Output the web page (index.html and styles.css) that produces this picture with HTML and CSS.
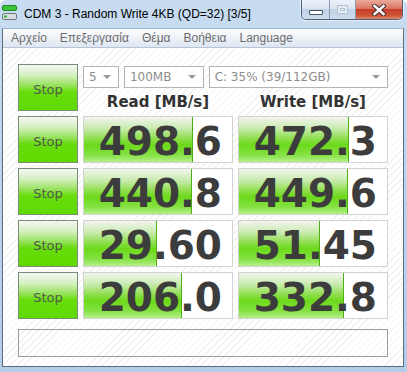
FILE: index.html
```html
<!DOCTYPE html>
<html lang="el">
<head>
    <meta charset="UTF-8">
    <title>CDM 3 - Random Write 4KB (QD=32) [3/5]</title>
    <link rel="stylesheet" href="styles.css">
</head>
<body>
    <div class="window">
        <div class="titlebar">
            <svg class="app-icon" width="15" height="16" viewBox="0 0 15 16">
                <rect x="0.5" y="0.5" width="14" height="5" rx="1.5" fill="#3cc23c" stroke="#1f8a1f"/>
                <rect x="0.5" y="8.5" width="14" height="6" rx="1.5" fill="#d8dde2" stroke="#6f7880"/>
                <rect x="2" y="10.5" width="3" height="2" fill="#38b838"/>
            </svg>
            <span class="title">CDM 3 - Random Write 4KB (QD=32) [3/5]</span>
            <div class="caption-buttons">
                <span class="cap-btn cap-min"><span class="glyph-min"></span></span>
                <span class="cap-btn cap-max"><span class="glyph-max"></span></span>
                <span class="cap-btn cap-close">
                    <svg width="14" height="12" viewBox="0 0 14 12">
                        <path d="M2.5 2 L11.5 10 M11.5 2 L2.5 10" stroke="#4a3431" stroke-width="4.5" stroke-linecap="square"/>
                        <path d="M2.5 2 L11.5 10 M11.5 2 L2.5 10" stroke="#ffffff" stroke-width="2.4" stroke-linecap="square"/>
                    </svg>
                </span>
            </div>
        </div>

        <div class="client">
            <div class="menubar">
                <span class="menu-item">Αρχείο</span>
                <span class="menu-item">Επεξεργασία</span>
                <span class="menu-item">Θέμα</span>
                <span class="menu-item">Βοήθεια</span>
                <span class="menu-item">Language</span>
            </div>

            <div class="content">
                <div class="bench">
                    <div class="stop-btn">Stop</div>
                    <div class="settings">
                        <div class="selects">
                            <div class="select sel-count">5<span class="arrow"></span></div>
                            <div class="select sel-size">100MB<span class="arrow"></span></div>
                            <div class="select sel-drive">C: 35% (39/112GB)<span class="arrow"></span></div>
                        </div>
                        <div class="headers">
                            <div class="col-head">Read [MB/s]</div>
                            <div class="col-head">Write [MB/s]</div>
                        </div>
                    </div>

                    <div class="stop-btn">Stop</div>
                    <div class="value-box"><div class="bar" style="width:109px"></div><span class="value">498.6</span></div>
                    <div class="value-box"><div class="bar" style="width:110px"></div><span class="value">472.3</span></div>

                    <div class="stop-btn">Stop</div>
                    <div class="value-box"><div class="bar" style="width:108px"></div><span class="value">440.8</span></div>
                    <div class="value-box"><div class="bar" style="width:109px"></div><span class="value">449.6</span></div>

                    <div class="stop-btn">Stop</div>
                    <div class="value-box"><div class="bar" style="width:73px"></div><span class="value">29.60</span></div>
                    <div class="value-box"><div class="bar" style="width:81px"></div><span class="value">51.45</span></div>

                    <div class="stop-btn">Stop</div>
                    <div class="value-box"><div class="bar" style="width:98px"></div><span class="value">206.0</span></div>
                    <div class="value-box"><div class="bar" style="width:105px"></div><span class="value">332.8</span></div>
                </div>

                <div class="comment"></div>
            </div>
        </div>
    </div>
</body>
</html>
```

FILE: styles.css
```css
* {
    margin: 0;
    padding: 0;
    box-sizing: border-box;
}

body {
    width: 407px;
    height: 372px;
    overflow: hidden;
    background: #ffffff;
    font-family: 'DejaVu Sans', Verdana, sans-serif;
}

.window {
    width: 407px;
    height: 372px;
    display: flex;
    flex-direction: column;
    background: linear-gradient(#c8dcf1, #b9d2ec 60%, #b3cde9);
    border-radius: 6px 6px 0 0;
}

/* title bar */

.titlebar {
    height: 28px;
    display: flex;
    align-items: flex-start;
    position: relative;
}

.app-icon {
    margin: 5px 0 0 2px;
}

.title {
    margin: 7px 0 0 7px;
    font-family: 'Liberation Sans', Arial, sans-serif;
    font-size: 12px;
    line-height: 14px;
    color: #000;
}

.caption-buttons {
    position: absolute;
    top: 0;
    right: 4px;
    display: flex;
    height: 20px;
    border: 1px solid #4f5f74;
    border-top: none;
    border-radius: 0 0 5px 5px;
    overflow: hidden;
    box-shadow: 0 0 0 1px rgba(255, 255, 255, 0.5);
}

.cap-btn {
    display: flex;
    align-items: center;
    justify-content: center;
    height: 100%;
    background: linear-gradient(#eef3f9, #dbe5f1 45%, #c3d3e6 50%, #cddcee);
}

.cap-min {
    width: 28px;
    border-right: 1px solid #8599b1;
}

.cap-max {
    width: 26px;
    border-right: 1px solid #8599b1;
}

.cap-close {
    width: 46px;
    background: linear-gradient(#ecaa9c, #db7462 45%, #c63f29 50%, #cb5236 80%, #de8a6a);
}

.glyph-min {
    width: 14px;
    height: 5px;
    margin-top: 5px;
    background: #ffffff;
    border: 1px solid #46556a;
    border-radius: 1px;
}

.glyph-max {
    width: 11px;
    height: 9px;
    border: 1px solid #b3c1d2;
    background: #e6edf5;
    box-shadow: inset 0 0 0 2px #e6edf5, inset 0 0 0 3px #b3c1d2;
}

/* client area */

.client {
    flex: 1;
    margin: 0 3px 5px 2px;
    border: 1px solid #5e6b7b;
    border-top: 1px solid #9fb3cc;
    display: flex;
    flex-direction: column;
}

.menubar {
    height: 19px;
    display: flex;
    align-items: center;
    padding-left: 1px;
    background: linear-gradient(#fcfdfe, #eef2f8 50%, #dde6f1);
    border-bottom: 1px solid #b9c5d6;
}

.menu-item {
    padding: 0 6.5px;
    font-family: 'Liberation Sans', Arial, sans-serif;
    font-size: 12px;
    color: #6d6d6d;
}

.menu-item:first-child {
    padding-left: 7px;
}

.content {
    flex: 1;
    padding: 16px 0 0 15px;
    background: repeating-linear-gradient(135deg, #ffffff 0, #ffffff 4px, #f1f1f1 4px, #f1f1f1 5px);
}

.bench {
    display: grid;
    grid-template-columns: 60px 150px 150px;
    grid-auto-rows: 47px;
    gap: 5px;
}

.stop-btn {
    display: flex;
    align-items: center;
    justify-content: center;
    padding-top: 3px;
    border: 1px solid #7a8b78;
    background: linear-gradient(#f5f7f2 0%, #d6f0c4 22%, #98e35e 45%, #68dc0c 60%, #5fda00 100%);
    font-size: 13px;
    color: #4f584c;
}

.settings {
    grid-column: span 2;
    display: flex;
    flex-direction: column;
}

.selects {
    display: flex;
    gap: 5px;
    margin-top: 2px;
}

.select {
    height: 22px;
    position: relative;
    padding-left: 5px;
    border: 1px solid #b4b4b4;
    background: #ffffff;
    font-size: 12px;
    line-height: 20px;
    color: #8c8c8c;
}

.sel-count {
    width: 36px;
}

.sel-size {
    width: 80px;
}

.sel-drive {
    width: 180px;
}

.arrow {
    position: absolute;
    right: 7px;
    top: 8px;
    border-left: 4px solid transparent;
    border-right: 4px solid transparent;
    border-top: 4px solid #9a9a9a;
}

.headers {
    display: flex;
    gap: 5px;
    margin-top: 5px;
}

.col-head {
    width: 150px;
    text-align: center;
    font-size: 15px;
    font-weight: bold;
    line-height: 19px;
    color: #333333;
}

.value-box {
    position: relative;
    display: flex;
    justify-content: flex-end;
    border: 1px solid #d2d2d2;
    background: #ffffff;
}

.bar {
    position: absolute;
    top: 0;
    left: 0;
    bottom: 0;
    border-right: 1px solid #4fae12;
    background: linear-gradient(#f2f5ef 0%, #c9ebb0 25%, #8ede4c 48%, #6cd91a 62%, #86e244 85%, #b6ef8c 100%);
}

.value {
    position: relative;
    padding: 4px 10px 0 0;
    font-size: 39px;
    font-weight: bold;
    line-height: 41px;
    color: #3c3c3c;
}

.comment {
    width: 370px;
    height: 28px;
    margin-top: 10px;
    border: 1px solid #9c9c9c;
}
```
